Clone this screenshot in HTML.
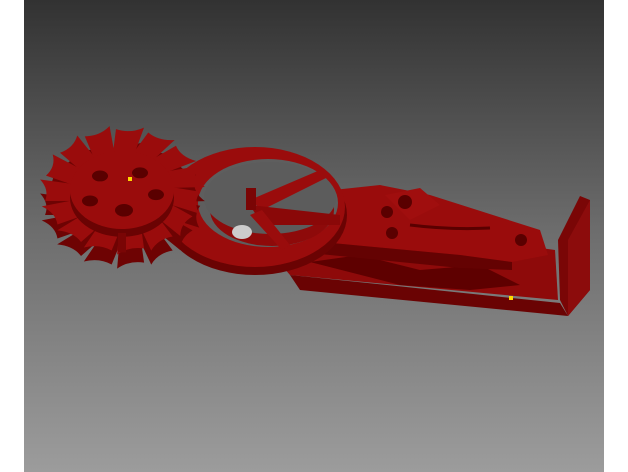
<!DOCTYPE html>
<html><head><meta charset="utf-8"><style>
html,body{margin:0;padding:0;background:#fff;width:628px;height:472px;overflow:hidden}
svg{display:block}
</style></head><body>
<svg width="628" height="472" viewBox="0 0 628 472" xmlns="http://www.w3.org/2000/svg">
<defs>
<linearGradient id="bg" x1="0" y1="0" x2="0" y2="1">
<stop offset="0" stop-color="#323232"/><stop offset="0.5" stop-color="#6e6e6e"/><stop offset="1" stop-color="#9c9c9c"/>
</linearGradient>
<path id="tooth" d="M-10,-38 L10,-38 L22,-80 Q8,-72 -6,-78 Z"/>
</defs>
<rect x="0" y="0" width="628" height="472" fill="#fff"/>
<rect x="24" y="0" width="580" height="472" fill="url(#bg)"/>
<!-- base plate -->
<polygon points="230,205 555,250 558,300 290,275" fill="#8e0a0a"/>
<polygon points="290,275 560,303 568,316 300,290" fill="#6a0303"/>
<polygon points="310,262 360,255 420,270 480,265 520,285 470,290 400,285" fill="#5e0000"/>
<!-- right wall -->
<polygon points="558,240 580,196 590,200 590,290 568,316 560,300" fill="#7a0606"/>
<polygon points="568,240 590,200 590,290 568,316" fill="#8c0c0c"/>
<!-- arm -->
<polygon points="240,200 380,185 430,195 540,230 548,255 512,262 460,255 300,240" fill="#9a0c0c"/>
<polygon points="300,240 460,255 512,262 512,270 460,268 300,252" fill="#640202"/>
<polygon points="385,195 420,188 440,205 410,220" fill="#a00e0e"/>
<circle cx="405" cy="202" r="7" fill="#5a0000"/>
<circle cx="387" cy="212" r="6" fill="#5a0000"/>
<circle cx="392" cy="233" r="6" fill="#5a0000"/>
<circle cx="521" cy="240" r="6" fill="#5a0000"/>
<path d="M410,225 Q450,230 490,228" stroke="#5a0000" stroke-width="3" fill="none"/>
<!-- ring -->
<ellipse cx="255" cy="215" rx="92" ry="60" fill="#6a0303"/>
<ellipse cx="255" cy="207" rx="90" ry="60" fill="#9a0c0c"/>
<ellipse cx="268" cy="203" rx="70" ry="44" fill="#5e5e5e"/>
<ellipse cx="272" cy="210" rx="62" ry="36" fill="#8e0a0a"/>
<ellipse cx="270" cy="198" rx="66" ry="36" fill="#5c5c5c"/>
<ellipse cx="242" cy="232" rx="10" ry="7" fill="#ccc"/>
<polygon points="250,200 320,170 326,178 262,210" fill="#9a0c0c"/>
<polygon points="250,205 340,215 340,225 262,225" fill="#8a0808"/>
<polygon points="262,210 290,245 282,250 250,215" fill="#9a0c0c"/>
<rect x="246" y="188" width="10" height="22" fill="#7a0505"/>
<!-- gear -->
<g transform="translate(122,190) scale(1,0.78)">
<g fill="#6e0303" transform="translate(0,18)">
<use href="#tooth" transform="rotate(0)"/><use href="#tooth" transform="rotate(24)"/><use href="#tooth" transform="rotate(48)"/><use href="#tooth" transform="rotate(72)"/><use href="#tooth" transform="rotate(96)"/><use href="#tooth" transform="rotate(120)"/><use href="#tooth" transform="rotate(144)"/><use href="#tooth" transform="rotate(168)"/><use href="#tooth" transform="rotate(192)"/><use href="#tooth" transform="rotate(216)"/><use href="#tooth" transform="rotate(240)"/><use href="#tooth" transform="rotate(264)"/><use href="#tooth" transform="rotate(288)"/><use href="#tooth" transform="rotate(312)"/><use href="#tooth" transform="rotate(336)"/>
</g>
<g fill="#9a0c0c">
<use href="#tooth" transform="rotate(0)"/><use href="#tooth" transform="rotate(24)"/><use href="#tooth" transform="rotate(48)"/><use href="#tooth" transform="rotate(72)"/><use href="#tooth" transform="rotate(96)"/><use href="#tooth" transform="rotate(120)"/><use href="#tooth" transform="rotate(144)"/><use href="#tooth" transform="rotate(168)"/><use href="#tooth" transform="rotate(192)"/><use href="#tooth" transform="rotate(216)"/><use href="#tooth" transform="rotate(240)"/><use href="#tooth" transform="rotate(264)"/><use href="#tooth" transform="rotate(288)"/><use href="#tooth" transform="rotate(312)"/><use href="#tooth" transform="rotate(336)"/>
</g>
<ellipse cx="0" cy="10" rx="52" ry="50" fill="#6a0303"/>
<ellipse cx="0" cy="0" rx="52" ry="50" fill="#9a0c0c"/>
<ellipse cx="-22" cy="-18" rx="8" ry="7" fill="#5a0000"/>
<ellipse cx="18" cy="-22" rx="8" ry="7" fill="#5a0000"/>
<ellipse cx="34" cy="6" rx="8" ry="7" fill="#5a0000"/>
<ellipse cx="2" cy="26" rx="9" ry="8" fill="#5a0000"/>
<ellipse cx="-32" cy="14" rx="8" ry="7" fill="#5a0000"/>
<rect x="-4" y="55" width="8" height="25" fill="#7a0505"/>
</g>
<rect x="128" y="177" width="4" height="4" fill="#ffd800"/>
<rect x="509" y="296" width="4" height="4" fill="#ffd800"/>
</svg>
</body></html>
